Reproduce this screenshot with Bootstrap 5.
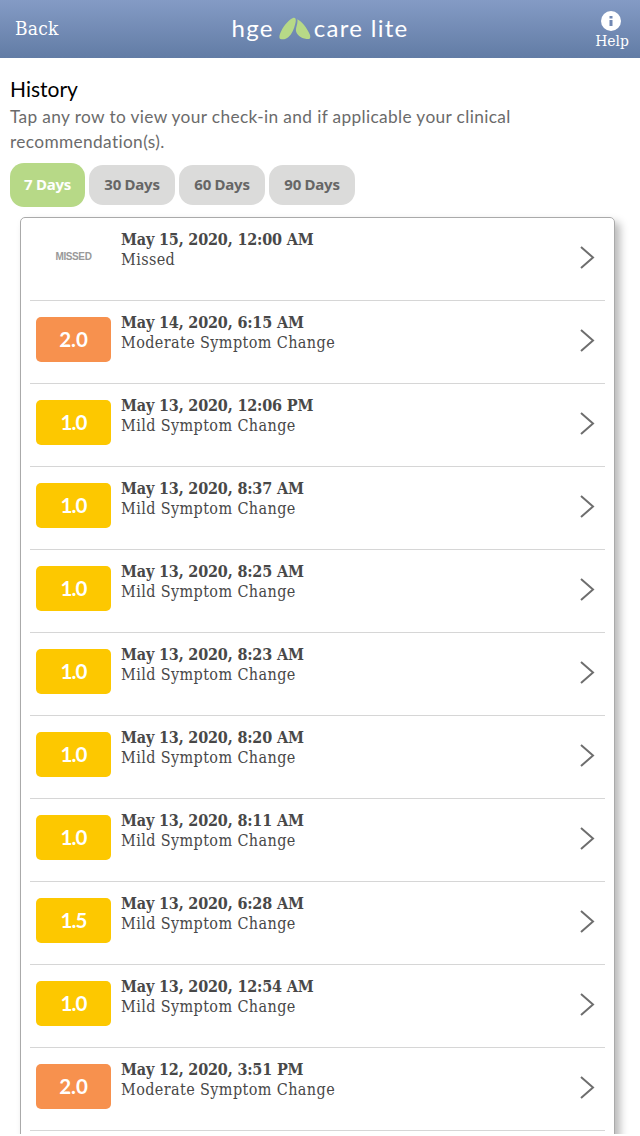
<!DOCTYPE html>
<html lang="en">
<head>
<meta charset="utf-8">
<meta name="viewport" content="width=device-width, initial-scale=1">
<title>hge care lite - History</title>
<link rel="stylesheet" href="https://cdn.jsdelivr.net/npm/bootstrap@5.3.0/dist/css/bootstrap.min.css">
<style>
html,body{height:1136px;overflow:hidden}
body{background:#fff;color:#484848;font-family:"DejaVu Serif Condensed","DejaVu Serif","Liberation Serif",serif;font-size:16px;line-height:20px}
.app{height:1134px;overflow:hidden}
.topbar{height:58px;background:linear-gradient(#849bc5,#627ca5);color:#fff}
.side{width:120px}
.back{font-size:19px;padding:0 0 2px 15px;letter-spacing:.2px}
.help{font-size:15.5px;line-height:18px;padding-right:11px;padding-top:2px}
.help span{margin-top:1px}
.brand-text{font-family:Lato,sans-serif;font-size:24px;line-height:28px;letter-spacing:1.3px;padding-bottom:2px}
.brand-text svg{margin:2px 3px 0 5px}
.intro{padding:18px 10px 0;font-family:Lato,"Open Sans",sans-serif}
.intro h1{font-size:21px;font-weight:400;line-height:26px;color:#000;margin:0}
.intro p{font-size:17.3px;line-height:25px;color:#6b6b6b;margin:2px 0 0;letter-spacing:.36px;white-space:nowrap}
.ranges{padding:8px 10px 0;gap:4px;height:53px}
.range{width:86px;height:40px;border-radius:14px;border:0;background:#dbdbda;color:#666;font:bold 15px "Noto Sans","Open Sans",sans-serif;letter-spacing:-.25px;padding:0 0 2px}
.range.active{width:75px;height:44px;background:#b7d987;color:#fff}
.history{margin:10px 25px 0 20px;height:960px;border:1px solid #aaa;border-radius:5px;box-shadow:5px 5px 9px rgba(0,0,0,.28);padding:0 9px}
.entry{height:83px;border-bottom:1px solid #d6d6d6;padding:0 10px 0 6px}
.score{width:75px;height:45px;margin-top:16px;border-radius:5px;color:#fff;font:bold 20.5px/45px Lato,"Noto Sans",sans-serif;text-align:center}
.mild{background:#fdc800;letter-spacing:-.8px}
.moderate{background:#f7914e}
.missed{color:#999;font:bold 10px/45px "Liberation Sans",sans-serif;letter-spacing:-.4px}
.detail{margin:12px 0 0 10px;letter-spacing:.4px}
.detail strong{display:block;letter-spacing:-.17px}
.chev{margin-top:28px}
</style>
</head>
<body>
<div class="app">
<header class="topbar d-flex align-items-center justify-content-between">
  <div class="side back">Back</div>
  <div class="d-flex align-items-center brand-text">
    <span class="hge">hge</span>
    <svg width="32" height="24" viewBox="0 0 32 24" fill="#b7d987"><path d="M14.500 .8C17 .2 17.300 3 16.200 7C15 12 13 17 9.500 20C7 22.400 4 22.500 1.500 22C-.5 21.500 .5 17 2.500 13.500C5 8.500 10.500 2 14.500 .8Z"/><path d="M18.300 2.200C22.500 4 28.500 11.500 30.800 17.500C32.200 21.500 30.500 22.400 27.500 22C21.500 21.200 17.500 17.500 17 14C16.500 10 19.200 7 18.300 2.200Z"/></svg>
    <span class="care">care lite</span>
  </div>
  <div class="side help d-flex flex-column align-items-end">
    <svg class="me-2" width="20" height="20" viewBox="0 0 20 20"><circle cx="10" cy="10" r="10" fill="#fff"/><path d="M8.500 5h3v2.500h-3zM8.500 9h3v6h-3z" fill="#7188b3"/></svg>
    <span>Help</span>
  </div>
</header>
<section class="intro">
  <h1><span>History</span></h1>
  <p>Tap any row to view your check-in and if applicable your clinical<br>recommendation(s).</p>
</section>
<div class="ranges d-flex align-items-center">
  <button class="range active">7 Days</button><button class="range">30 Days</button><button class="range">60 Days</button><button class="range">90 Days</button>
</div>
<main class="history" id="history"></main>
</div>
<script>
const entries = [
  ["May 15, 2020, 12:00 AM", "MISSED"], ["May 14, 2020, 6:15 AM", "2.0"],
  ["May 13, 2020, 12:06 PM", "1.0"], ["May 13, 2020, 8:37 AM", "1.0"],
  ["May 13, 2020, 8:25 AM", "1.0"], ["May 13, 2020, 8:23 AM", "1.0"],
  ["May 13, 2020, 8:20 AM", "1.0"], ["May 13, 2020, 8:11 AM", "1.0"],
  ["May 13, 2020, 6:28 AM", "1.5"], ["May 13, 2020, 12:54 AM", "1.0"],
  ["May 12, 2020, 3:51 PM", "2.0"]
];
document.getElementById("history").innerHTML = entries.map(([date, score]) => {
  const [kind, label] = score === "MISSED" ? ["missed", "Missed"] : score === "2.0" ? ["moderate", "Moderate Symptom Change"] : ["mild", "Mild Symptom Change"];
  return `<div class="entry d-flex"><div class="score ${kind}">${score}</div>
    <div class="detail flex-grow-1"><strong><span>${date}</span></strong><span>${label}</span></div>
    <svg class="chev" width="15" height="24" viewBox="0 0 15 24" fill="none" stroke="#6e6e6e" stroke-width="2"><path d="M1 1L13 11.500L1 22"/></svg></div>`;
}).join("");
</script>
<script src="https://cdn.jsdelivr.net/npm/bootstrap@5.3.0/dist/js/bootstrap.bundle.min.js"></script>
</body>
</html>
